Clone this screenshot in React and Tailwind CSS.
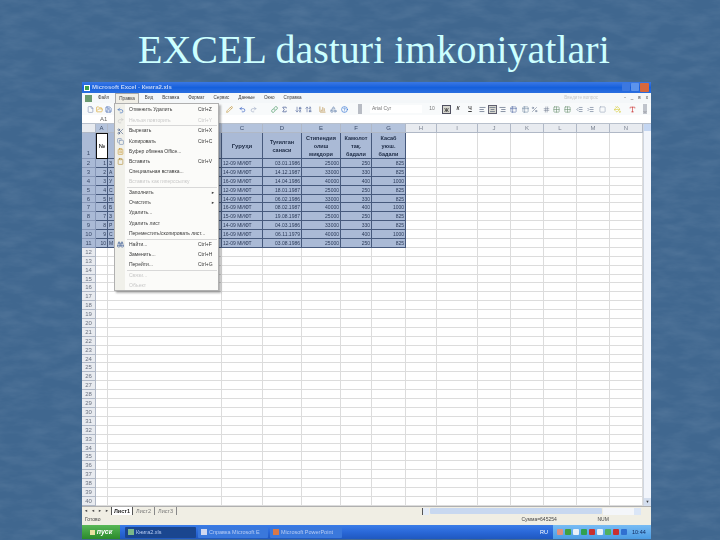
import {
  File, FolderOpen, Save, Undo2, Redo2, Scissors, Copy, ClipboardList, Clipboard, Binoculars,
  Pencil, Link, Sigma, ArrowDownAZ, ArrowUpZA, ChartColumn, Shapes, CircleHelp, AlignLeft,
  AlignCenter, AlignRight, Table2, Percent, Hash, IndentDecrease, IndentIncrease, Square, PaintBucket, Type,
  ChevronDown, Grid2x2,
} from "lucide-react";

const cols = [14, 12, 114, 41, 39, 39, 31, 34, 31, 41, 33, 33, 33, 33, 33];
const letters = ["", "A", "B", "C", "D", "E", "F", "G", "H", "I", "J", "K", "L", "M", "N"];
const gridStyle = "grid grid-cols-[14px_12px_114px_41px_39px_39px_31px_34px_31px_41px_33px_33px_33px_33px_33px]";
const data = [
  [1, "З", "12-09 МИФТ", "03.01.1986", 25000, 250, 825],
  [2, "А", "14-09 МИФТ", "14.12.1987", 33000, 330, 825],
  [3, "У", "16-09 МИФТ", "14.04.1986", 40000, 400, 1000],
  [4, "С", "12-09 МИФТ", "18.01.1987", 25000, 250, 825],
  [5, "Н", "14-09 МИФТ", "06.02.1986", 33000, 330, 825],
  [6, "Б", "16-09 МИФТ", "08.02.1987", 40000, 400, 1000],
  [7, "З", "15-09 МИФТ", "19.08.1987", 25000, 250, 825],
  [8, "Р", "14-09 МИФТ", "04.03.1986", 33000, 330, 825],
  [9, "С", "16-09 МИФТ", "06.11.1979", 40000, 400, 1000],
  [10, "М", "12-09 МИФТ", "03.08.1986", 25000, 250, 825],
];
const menu = [
  { t: "Отменить Удалить", k: "Ctrl+Z", I: Undo2, c: "text-[#2f62b8]" },
  { t: "Нельзя повторить", k: "Ctrl+Y", off: true, I: Redo2, c: "text-[#c4c4c4]", sep: true },
  { t: "Вырезать", k: "Ctrl+X", I: Scissors, c: "text-[#4a5f88]" },
  { t: "Копировать", k: "Ctrl+C", I: Copy, c: "text-[#6a84b0]" },
  { t: "Буфер обмена Office...", I: ClipboardList, c: "text-[#c8962c]" },
  { t: "Вставить", k: "Ctrl+V", I: Clipboard, c: "text-[#b08a30]" },
  { t: "Специальная вставка..." },
  { t: "Вставить как гиперссылку", off: true, sep: true },
  { t: "Заполнить", a: true },
  { t: "Очистить", a: true },
  { t: "Удалить..." },
  { t: "Удалить лист" },
  { t: "Переместить/скопировать лист...", sep: true },
  { t: "Найти...", k: "Ctrl+F", I: Binoculars, c: "text-[#3f5f98]" },
  { t: "Заменить...", k: "Ctrl+H" },
  { t: "Перейти...", k: "Ctrl+G", sep: true },
  { t: "Связи...", off: true },
  { t: "Объект", off: true },
];
const menubar = ["Файл", "Правка", "Вид", "Вставка", "Формат", "Сервис", "Данные", "Окно", "Справка"];
const leftTools = [
  { I: File, c: "text-[#7a8ab0]" },
  { I: FolderOpen, c: "text-[#d8a020]" },
  { I: Save, c: "text-[#3a60b0]" },
];
const midTools = [
  { I: Pencil, c: "text-[#c09030]", m: "mr-[6px]" },
  { I: Undo2, c: "text-[#2050c0]", m: "mr-[4px]" },
  { I: Redo2, c: "text-[#98a4c0]", m: "mr-[14px]" },
  { I: Link, c: "text-[#3a9058]", m: "mr-[3px]" },
  { I: Sigma, c: "text-[#223a80]", m: "mr-[7px]" },
  { I: ArrowDownAZ, c: "text-[#4a6098]", m: "mr-[3px]" },
  { I: ArrowUpZA, c: "text-[#4a6098]", m: "mr-[7px]" },
  { I: ChartColumn, c: "text-[#b08030]", m: "mr-[4px]" },
  { I: Shapes, c: "text-[#5070a0]", m: "mr-[4px]" },
  { I: CircleHelp, c: "text-[#2068d0]", m: "" },
];
const fmtTools = [
  { I: AlignLeft, c: "text-[#3a4a68]", m: "mr-[3px]" },
  { I: AlignCenter, c: "text-[#3a4a68] bg-[#d8d8d0] outline outline-[#606070]", m: "mr-[3px]" },
  { I: AlignRight, c: "text-[#3a4a68]", m: "mr-[4px]" },
  { I: Table2, c: "text-[#5a70a8]", m: "mr-[5px]" },
  { I: Table2, c: "text-[#7a90a8]", m: "mr-[2px]" },
  { I: Percent, c: "text-[#6a7890]", m: "mr-[5px]" },
  { I: Hash, c: "text-[#7a8498]", m: "mr-[3px]" },
  { I: Grid2x2, c: "text-[#6a9070]", m: "mr-[4px]" },
  { I: Grid2x2, c: "text-[#6a9070]", m: "mr-[5px]" },
  { I: IndentDecrease, c: "text-[#5a6a88]", m: "mr-[4px]" },
  { I: IndentIncrease, c: "text-[#5a6a88]", m: "mr-[5px]" },
  { I: Square, c: "text-[#98a4b8]", m: "mr-[8px]" },
  { I: PaintBucket, c: "text-[#d8cc30]", m: "mr-[8px]" },
  { I: Type, c: "text-[#c82020]", m: "" },
];

function Cell() {
  return <div className="h-[8.9px] border-r border-b border-[#dcdcdc]" />;
}
function Sel({ children, cls = "" }) {
  return <div className={`h-[8.9px] leading-[8px] border-r border-b border-[#46597c] bg-[#aabad6] text-[#2b3a58] overflow-hidden whitespace-nowrap px-px ${cls}`}>{children}</div>;
}
function Head({ children, cls = "" }) {
  return <div className={`h-[26px] flex items-center justify-center text-center leading-[8px] font-bold text-[5.5px] border-r border-b border-[#46597c] bg-[#aabad6] text-[#1c2a44] ${cls}`}>{children}</div>;
}

export default function App() {
  const rows = Array.from({ length: 29 }, (_, i) => i + 12);
  return (
    <div className="relative w-[720px] h-[540px] overflow-hidden bg-[#40678f] font-['Liberation_Sans',sans-serif]">
      <svg className="absolute inset-0 w-full h-full opacity-[0.14]" aria-hidden="true">
        <filter id="paper">
          <feTurbulence type="fractalNoise" baseFrequency="0.035 0.1" numOctaves="4" seed="7" />
          <feColorMatrix values="0 0 0 0 0.8  0 0 0 0 0.87  0 0 0 0 0.96  1.1 0 0 0 -0.38" />
        </filter>
        <rect width="720" height="540" filter="url(#paper)" />
      </svg>
      <div className="relative h-full flex flex-col">
        <div className="h-[82px] pl-[138px] pt-[26px] font-['Liberation_Serif',serif] text-[40px] leading-[48px] text-[#ccffff] whitespace-nowrap">
          EXCEL dasturi imkoniyatlari
        </div>

        <div className="relative ml-[82px] w-[569px] h-[457px] flex flex-col bg-white text-[5px] text-[#3c3c3c] blur-[0.35px]">
          {/* title bar */}
          <div className="h-[11px] flex items-center gap-[2px] px-[2px] bg-gradient-to-b from-[#3a78e4] via-[#1560dc] to-[#2a6ee0] text-[#c4d4f4] text-[6px] font-bold">
            <span className="w-[6px] h-[6px] bg-[#3fa04a] border border-white" />
            <span>Microsoft Excel - Книга2.xls</span>
            <div className="ml-auto flex gap-px">
              <span className="w-[8px] h-[8px] rounded-[1px] bg-[#3c78e0]" />
              <span className="w-[8px] h-[8px] rounded-[1px] bg-[#5c94ec]" />
              <span className="w-[9px] h-[9px] rounded-[1px] bg-[#d8683c]" />
            </div>
          </div>
          {/* menu bar */}
          <div className="h-[10px] flex items-center bg-[#f4f7f9] pl-[3px] text-[4.6px]">
            <span className="w-[7px] h-[7px] bg-[#6a9a70] mr-[3px]" />
            {menubar.map((m) => (
              <span key={m} className={`px-[3px] mr-[3px] leading-[10px] ${m === "Правка" ? "bg-[#f0eee6] border-x border-t border-[#a8a8a8]" : ""}`}>{m}</span>
            ))}
            <span className="ml-auto mr-[26px] text-[#c8c8c8]">Введите вопрос</span>
            <div className="flex gap-[5px] mr-[3px] text-[#444]">
              <span>-</span><span>_</span><span>в</span><span>x</span>
            </div>
          </div>
          {/* toolbar */}
          <div className="h-[12px] flex items-center bg-[#f8fafb] pl-[5px]">
            {leftTools.map(({ I, c }, i) => (
              <I key={i} size={7} strokeWidth={2} className={`mr-[2px] ${c}`} />
            ))}
            <div className="ml-[112px] flex items-center">
              {midTools.map(({ I, c, m }, i) => (
                <I key={i} size={7} strokeWidth={2} className={`${c} ${m}`} />
              ))}
            </div>
            <span className="ml-[10px] w-[4px] h-[10px] bg-[#b8bcc4]" />
            <span className="ml-[8px] w-[52px] pl-[2px] bg-white text-[#777]">Arial Cyr</span>
            <span className="w-[20px] text-[#777] text-center">10</span>
            <span className="w-[9px] h-[9px] leading-[8px] text-center font-bold border border-[#505060] bg-[#d8d8d0] mr-[1px]">Ж</span>
            <span className="w-[12px] text-center italic font-bold">К</span>
            <span className="w-[12px] text-center font-bold underline mr-[3px]">Ч</span>
            {fmtTools.map(({ I, c, m }, i) => (
              <I key={i} size={7} strokeWidth={2} className={`${c} ${m}`} />
            ))}
            <span className="ml-[7px] w-[4px] h-[10px] bg-[#c0c4cc] flex items-end"><ChevronDown size={4} /></span>
          </div>
          {/* formula bar */}
          <div className="h-[9px] flex items-center bg-white pl-[18px] border-b border-[#b8c0cc] text-[6px] text-[#666]">A1</div>

          {/* sheet */}
          <div className="flex-1 flex min-h-0 overflow-hidden">
            <div className="w-[561px] overflow-hidden">
              <div className={`${gridStyle} h-[9px] bg-[#d8dee8]`}>
                {letters.map((l, i) => (
                  <div key={i} className={`h-[9px] leading-[8px] text-center text-[6px] border-r border-b border-[#b0b8c6] ${i >= 1 && i <= 7 ? "bg-[#b4c3dc] text-[#3a4a68]" : "bg-[#e8ebf0] text-[#7a8290]"}`}>{l}</div>
                ))}
              </div>
              <div className={gridStyle}>
                <div className="h-[26px] flex items-end justify-center bg-[#aabad6] border-r border-b border-[#8898b8] text-[6px] text-[#3a4a68]">1</div>
                <div className="h-[26px] flex items-center justify-center bg-white border border-[#101010] font-bold text-[6px] text-[#333]">№</div>
                <Head />
                <Head><span className="text-[6px]">Гуруҳи</span></Head>
                <Head>Туғилган<br />санаси</Head>
                <Head>Стипендия<br />олиш<br />миқдори</Head>
                <Head>Камолот<br />тақ.<br />бадали</Head>
                <Head>Касаб<br />уюш.<br />бадали</Head>
                {cols.slice(8).map((_, i) => <div key={i} className="h-[26px] border-r border-b border-[#dcdcdc]" />)}
              </div>
              {data.map((d, r) => (
                <div key={r} className={gridStyle}>
                  <div className="h-[8.9px] leading-[8px] text-center text-[6px] bg-[#aabad6] border-r border-b border-[#8898b8] text-[#3a4a68]">{r + 2}</div>
                  <Sel cls="text-right">{d[0]}</Sel>
                  <Sel>{d[1]}</Sel>
                  <Sel>{d[2]}</Sel>
                  <Sel cls="text-right">{d[3]}</Sel>
                  <Sel cls="text-right">{d[4]}</Sel>
                  <Sel cls="text-right">{d[5]}</Sel>
                  <Sel cls="text-right">{d[6]}</Sel>
                  {cols.slice(8).map((_, i) => <Cell key={i} />)}
                </div>
              ))}
              {rows.map((r) => (
                <div key={r} className={gridStyle}>
                  <div className="h-[8.9px] leading-[8px] text-center text-[6px] bg-[#e8ebf0] border-r border-b border-[#b0b8c6] text-[#6a7280]">{r}</div>
                  {cols.slice(1).map((_, i) => <Cell key={i} />)}
                </div>
              ))}
            </div>
            {/* vertical scrollbar */}
            <div className="w-[8px] flex flex-col justify-between bg-[#f2f5fb] border-l border-[#d0d6e0]">
              <span className="h-[7px] bg-[#c4d6f2]" />
              <span className="h-[8px] bg-[#d4deee] text-center leading-[8px] text-[4px]">▼</span>
            </div>
          </div>

          {/* tabs */}
          <div className="h-[9px] flex items-center bg-[#f0eee4] pl-[2px] text-[5.5px] border-t border-[#b0b0b0]">
            <div className="w-[27px] flex gap-[3px] text-[#444] text-[4px]">
              <span>◄</span><span>◄</span><span>►</span><span>►</span>
            </div>
            <span className="px-[2px] font-bold text-[#222] border-x border-[#555] bg-white">Лист1</span>
            <span className="px-[3px] text-[#777] border-r border-[#888]">Лист2</span>
            <span className="px-[3px] text-[#777] border-r border-[#888]">Лист3</span>
            <div className="ml-[245px] flex-1 h-[7px] flex items-center mr-[10px]">
              <span className="w-[7px] h-[7px] bg-[#e4ecf8] border-l border-[#555]" />
              <span className="w-[172px] h-[6px] rounded-[1px] bg-[#c8d8f0] mx-px" />
              <span className="flex-1 h-[7px] bg-[#f4f6fa]" />
              <span className="w-[7px] h-[7px] bg-[#dbe6f7]" />
            </div>
          </div>
          {/* status */}
          <div className="h-[10px] flex items-center bg-[#f0eee4] pl-[3px] text-[5px] text-[#444]">
            <span>Готово</span>
            <span className="ml-[421px] w-[76px]">Сумма=645254</span>
            <span>NUM</span>
          </div>
          {/* taskbar */}
          <div className="h-[14px] flex items-center bg-gradient-to-b from-[#3b7de8] via-[#2a68d8] to-[#1f58c0] text-[#b8ccf4] text-[5.5px]">
            <span className="w-[38px] h-full flex items-center justify-center gap-[2px] bg-gradient-to-b from-[#58b858] to-[#2a8a2a] text-white font-bold italic text-[7px]">
              <span className="w-[5px] h-[5px] bg-[#e8e0a0]" />пуск
            </span>
            <span className="ml-[5px] w-[71px] h-[11px] flex items-center gap-[2px] pl-[3px] bg-[#1a468f] rounded-[1px] whitespace-nowrap">
              <span className="w-[6px] h-[6px] bg-[#7ab88a]" />Книга2.xls
            </span>
            <span className="ml-[2px] w-[70px] h-[11px] flex items-center gap-[2px] pl-[3px] bg-[#3a78dc] rounded-[1px] whitespace-nowrap overflow-hidden">
              <span className="w-[6px] h-[6px] bg-[#d0d8f0]" />Справка Microsoft E
            </span>
            <span className="ml-[2px] w-[72px] h-[11px] flex items-center gap-[2px] pl-[3px] bg-[#3a78dc] rounded-[1px] whitespace-nowrap overflow-hidden">
              <span className="w-[6px] h-[6px] bg-[#d87848]" />Microsoft PowerPoint
            </span>
            <span className="ml-auto mr-[5px] text-white">RU</span>
            <div className="w-[98px] h-full flex items-center gap-[2px] pl-[4px] bg-gradient-to-b from-[#78bcf4] to-[#4a9ce4] text-[#0f2a60]">
              {["#e09080", "#40a040", "#e8f0f8", "#30a050", "#c83030", "#e8f0f8", "#50b060", "#c83030", "#3070d0"].map((c, i) => (
                <span key={i} className="w-[6px] h-[6px] rounded-[1px]" style={{ background: c }} />
              ))}
              <span className="ml-[3px]">10:44</span>
            </div>
          </div>

          {/* open menu */}
          <div className="absolute left-[32px] top-[21px] w-[105px] h-[188px] bg-[#fbfbf9] border border-[#b0b0b0] shadow-[2px_2px_2px_rgba(0,0,0,0.3)] flex flex-col pt-[1px]">
            <div className="absolute inset-y-0 left-0 w-[10px] bg-[#f0f0ea]" />
            {menu.map((m, i) => (
              <div key={i} className={`relative h-[10.2px] shrink-0 flex items-center pl-[14px] pr-[6px] ${m.sep ? "mb-[0.6px]" : ""} ${m.off ? "text-[#c8c8c8]" : "text-[#383838]"}`}>
                {m.I && <m.I size={7} strokeWidth={2} className={`absolute left-[2px] ${m.c}`} />}
                <span className="whitespace-nowrap">{m.t}</span>
                {m.k && <span className="absolute left-[83px]">{m.k}</span>}
                {m.a && <span className="absolute right-[3px] text-[4px]">►</span>}
                {m.sep && <span className="absolute left-[12px] right-[1px] -bottom-[1px] h-px bg-[#d8d8d8]" />}
              </div>
            ))}
          </div>
        </div>
      </div>
    </div>
  );
}
